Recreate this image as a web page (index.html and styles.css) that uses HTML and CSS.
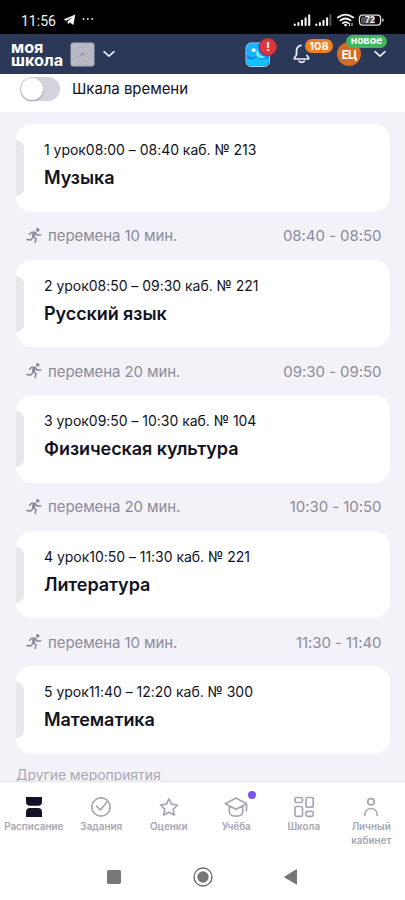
FILE: index.html
```
<!DOCTYPE html>
<html lang="ru">
<head>
<meta charset="utf-8">
<meta name="viewport" content="width=device-width, initial-scale=1">
<title>Моя школа</title>
<link rel="stylesheet" href="styles.css">
</head>
<body>
<svg width="0" height="0" class="defs">
  <symbol id="runner" viewBox="0 0 16 16">
    <circle cx="11.7" cy="1.9" r="1.8" fill="currentColor"/>
    <path d="M3.600 6.300 5.600 4.200 9.300 4.400 6.900 8.600 10 10.600 9.200 14.500M9.500 4.800 11.200 7.200 14.700 6.800M6.700 9.600 5.100 11.900 1 11.600" fill="none" stroke="currentColor" stroke-width="1.6" stroke-linecap="round" stroke-linejoin="round"/>
    <path d="M6.600 4.400 10.200 4.500 8.600 9.200 5.800 8.400Z" fill="currentColor"/>
  </symbol>
</svg>
<div class="screen">
  <div class="status">
    <span class="clock">11:56</span>
    <svg class="plane" width="13" height="12" viewBox="0 0 13 12"><path d="M.5 5.400 12.300.6 10.400 10.900 6.800 8.400 5 10.200 4.600 7.200 9.800 2.800 3.400 6.700Z" fill="#f2f2f2"/></svg>
    <svg class="more" width="12" height="4" viewBox="0 0 12 4"><g fill="#ddd"><circle cx="1.500" cy="2" r="1"/><circle cx="5.800" cy="2" r="1"/><circle cx="10.100" cy="2" r="1"/></g></svg>
    <svg class="signals" width="92" height="16" viewBox="0 0 92 16">
      <g stroke="#f4f4f4" stroke-width="2.100" stroke-linecap="round">
        <path d="M1.800 12.500v.5M5.400 11v2M9 8.800V13M12.600 6.200V13M16.200 3.200V13M23.300 12.500v.5M26.900 11v2M30.500 8.800V13M34.100 6.200V13"/><path d="M37.400 3.200V13" stroke="#555"/>
      </g>
      <g fill="none" stroke="#f4f4f4" stroke-width="1.800" stroke-linecap="round"><path d="M44.800 5.500q7.700-5.600 15.400 0M47.400 8.400q5.100-3.800 10.200 0M49.800 11.100q2.700-2 5.400 0"/></g>
      <circle cx="52.500" cy="13" r="1.300" fill="#f4f4f4"/><path d="M56.500 11v3M59 11v3" stroke="#ddd"/>
      <rect x="66.400" y="3.100" width="21.200" height="10" rx="3" fill="#080808" stroke="#ddd" stroke-width="1.300"/>
      <rect x="68" y="4.800" width="14" height="6.700" rx="1" fill="#555"/>
      <path d="M89.800 6.800v2.800" stroke="#ddd" stroke-width="1.400"/>
      <text x="77" y="11.100" text-anchor="middle" class="charge">72</text>
    </svg>
  </div>
  <header class="top">
    <div class="logo"><span>моя</span><span>школа</span></div>
    <svg class="crest" width="25" height="25" viewBox="0 0 25 25"><rect x=".5" y=".5" width="24" height="24" rx="3" fill="#b1b1bd"/><g fill="none" stroke="#cdcdd7" stroke-width=".7"><circle cx="12.500" cy="12.500" r="9.500"/><circle cx="12.500" cy="12.500" r="6.500"/><circle cx="12.500" cy="12.500" r="3.800"/><path d="M3 7V3h4M18 3h4v4M22 18v4h-4M7 22H3v-4M3 3l5 5m9 9 5 5M22 3l-5 5M8 17l-5 5"/></g><path d="M10.500 11h4v3h-4z" fill="#a0a0ae"/></svg>
    <svg class="chev" width="12" height="8" viewBox="0 0 12 8"><path d="m1 1.700 5 4.500 5-4.500"/></svg>
    <div class="app">
      <svg width="26" height="26" viewBox="0 0 26 26"><rect x="1" y="1" width="23.500" height="23.500" rx="5" fill="#0b83f2" stroke="#a9d5f4"/><path d="M1.700 15.500C5 18.500 10 18 12 14.200c2 3.500 7 4.500 11.500 1.500 1 5-1.500 8-5.500 8H7q-5.300 0-5.300-5Z" fill="#12c3ff"/><path d="M1.700 9.500V6Q1.700 1.700 6 1.700h7C12 9 14 14 21 15c-4 2-8 1.500-10-1-3 2.500-7 1.500-9.300-2Z" fill="#18b6ff"/><path d="M12.500 5c0 6 3 9.500 9 10.200-4 1.900-8.500.9-10.500-2.400Z" fill="#79eaff"/><circle cx="8.600" cy="8.300" r="2" fill="#fff"/></svg>
      <span class="alert">!</span>
    </div>
    <div class="bell">
      <svg width="18" height="20" viewBox="0 0 18 20"><path d="M8 1.400C4.800 2 3.500 4.400 3.500 7.500v3.300L1.300 14.100q-.4.900.7.900H15q1.100 0 .7-.9L14 11.500M6 17.200q2.700 2.400 5.300 0" fill="none" stroke="#eef0f8" stroke-width="1.700" stroke-linecap="round" stroke-linejoin="round"/></svg>
      <span class="count">108</span>
    </div>
    <div class="user"><span class="avatar">ЕЦ</span><span class="fresh">новое</span></div>
    <svg class="chev last" width="12" height="8" viewBox="0 0 12 8"><path d="m1 1.700 5 4.500 5-4.500"/></svg>
  </header>
  <div class="scale"><span class="switch"></span><span class="scale-label">Шкала времени</span></div>
  <main class="list">
    <article class="card"><p class="meta">1 урок08:00 – 08:40 каб. № 213</p><h2>Музыка</h2></article>
    <div class="break"><svg><use href="#runner"/></svg><span>перемена 10 мин.</span><time>08:40 - 08:50</time></div>
    <article class="card"><p class="meta">2 урок08:50 – 09:30 каб. № 221</p><h2>Русский язык</h2></article>
    <div class="break"><svg><use href="#runner"/></svg><span>перемена 20 мин.</span><time>09:30 - 09:50</time></div>
    <article class="card"><p class="meta">3 урок09:50 – 10:30 каб. № 104</p><h2>Физическая культура</h2></article>
    <div class="break"><svg><use href="#runner"/></svg><span>перемена 20 мин.</span><time>10:30 - 10:50</time></div>
    <article class="card"><p class="meta">4 урок10:50 – 11:30 каб. № 221</p><h2>Литература</h2></article>
    <div class="break"><svg><use href="#runner"/></svg><span>перемена 10 мин.</span><time>11:30 - 11:40</time></div>
    <article class="card"><p class="meta">5 урок11:40 – 12:20 каб. № 300</p><h2>Математика</h2></article>
    <h3 class="other">Другие мероприятия</h3>
  </main>
  <nav class="tabs">
    <a class="tab"><svg width="24" height="24" viewBox="0 0 24 24"><path d="M4 2h16v4.500q0 4.300-4 4.300H8q-4 0-4-4.300ZM4 22v-4.700q0-4.300 4-4.300h8q4 0 4 4.300V22Z" fill="#131127"/></svg><span>Расписание</span></a>
    <a class="tab"><svg class="line" width="24" height="24" viewBox="0 0 24 24"><circle cx="12" cy="12" r="9.200"/><path d="m7.500 11 3.800 4 6.700-8"/></svg><span>Задания</span></a>
    <a class="tab"><svg class="line" width="24" height="24" viewBox="0 0 24 24"><path d="m12 3.800 2.600 5.300 5.900.9-4.300 4.100 1 5.900-5.200-2.800L6.800 20l1-5.900L3.500 10l5.900-.9Z"/></svg><span>Оценки</span></a>
    <a class="tab"><svg class="line" width="24" height="24" viewBox="0 0 24 24"><path d="M1.300 8.700 12 3l10.700 5.700L12 14.300ZM5.300 11.200v5.500C5.300 20 9 21.200 12 21.200s6.700-1.200 6.700-4.500v-5.500M22.500 8.700V16"/></svg><i class="dot"></i><span>Учёба</span></a>
    <a class="tab"><svg class="line" width="24" height="24" viewBox="0 0 24 24"><rect x="3" y="2.500" width="7.500" height="5" rx="1.500"/><rect x="14" y="2.500" width="7.200" height="9.700" rx="1.700"/><rect x="3" y="11.500" width="7.500" height="9.800" rx="1.700"/><rect x="14" y="16.300" width="7.200" height="5" rx="1.500"/></svg><span>Школа</span></a>
    <a class="tab"><svg class="line" width="24" height="24" viewBox="0 0 24 24"><circle cx="12" cy="6.800" r="3.200"/><path d="M5.800 20.300c0-9.100 12.400-9.100 12.400 0"/></svg><span>Личный кабинет</span></a>
  </nav>
  <div class="system">
    <svg width="16" height="22" viewBox="0 0 16 22"><rect x="1" y="4" width="14" height="14" rx="1.700" fill="#777"/></svg>
    <svg width="22" height="22" viewBox="0 0 22 22"><circle cx="11" cy="11" r="9" fill="none" stroke="#666" stroke-width="1.300"/><circle cx="11" cy="11" r="5.700" fill="#777"/></svg>
    <svg width="16" height="22" viewBox="0 0 16 22"><path d="M14 3.500v14.800q0 .6-.6.300L1.500 11.500q-.8-.5 0-1L13.400 3.300q.6-.3.600.2Z" fill="#777"/></svg>
  </div>
</div>
</body>
</html>
```
FILE: styles.css
```
* { box-sizing: border-box; }
body { margin: 0; background: #f3f2f8; font-family: Inter, "Noto Sans", sans-serif; color: #11121f; }
p, h2, h3 { margin: 0; }
svg { display: block; flex: none; }
.defs { position: absolute; }
.screen { width: 405px; height: 900px; display: flex; flex-direction: column; overflow: hidden; }

.status { height: 34px; flex: none; background: #000; display: flex; align-items: center; padding: 6px 20px 0 21px; }
.clock { font: 400 14px/20px Roboto, sans-serif; color: #f2f2f2; width: 35px; white-space: nowrap; padding-top: 2px; }
.plane { margin-left: 7px; }
.more { margin-left: 6px; margin-top: -2px; }
.signals { margin-left: auto; }
.charge { font: 700 8.5px Roboto, sans-serif; fill: #fff; }

.top { height: 40px; flex: none; background: #2c3858; display: flex; align-items: center; padding: 0 19px 0 11px; color: #fff; }
.logo { display: flex; flex-direction: column; width: 52px; font-size: 16.2px; font-weight: 700; line-height: 13px; margin-top: -1px; }
.crest { margin-left: 7px; }
.chev { margin-left: 8px; fill: none; stroke: #eef0f8; stroke-width: 1.6; stroke-linecap: round; stroke-linejoin: round; }
.app { position: relative; margin-left: 130px; margin-top: 1px; }
.alert { position: absolute; left: 14px; top: -4px; width: 18px; height: 18px; border-radius: 50%; background: #e0353b; border: 1.5px solid #a82d40; font-size: 12px; font-weight: 700; line-height: 15px; text-align: center; }
.bell { position: relative; margin-left: 22px; }
.count { position: absolute; left: 12px; top: -5px; width: 28px; height: 14px; border-radius: 7px; background: #f08023; font-size: 11px; font-weight: 700; line-height: 14px; text-align: center; }
.user { position: relative; margin-left: 26px; }
.avatar { display: block; width: 24px; height: 24px; border-radius: 50%; background: #d56b20; font-size: 12px; font-weight: 700; line-height: 25px; text-align: center; letter-spacing: -.8px; }
.fresh { position: absolute; left: 9px; top: -7px; width: 41px; height: 13px; border-radius: 7px; background: #3db85c; font-size: 10.5px; font-weight: 700; line-height: 12px; text-align: center; }
.last { margin-left: auto; }

.scale { height: 38px; flex: none; background: #fff; display: flex; align-items: flex-start; padding: 2.5px 20px 0; }
.switch { width: 40px; height: 24px; border-radius: 12px; background: #d4d2dc; padding: 1px; }
.switch::before { content: ""; display: block; width: 22px; height: 22px; border-radius: 50%; background: #fff; box-shadow: 0 1px 2px #9995a0; }
.scale-label { margin-left: 12px; font-size: 15px; line-height: 24px; letter-spacing: -.05px; }

.list { flex: 1; min-height: 0; overflow: hidden; padding: 12.3px 15.5px 0 16px; }
.card { position: relative; height: 87.7px; border-radius: 16px; background: #fff; padding: 16.2px 28px 0; overflow: hidden; }
.card::before { content: ""; position: absolute; left: 0; top: 16px; width: 8px; height: 56px; border-radius: 0 8px 8px 0; background: #e7e7ec; }
.meta { font-size: 14px; line-height: 20px; white-space: nowrap; letter-spacing: -.03px; }
.card h2 { font-size: 18px; font-weight: 600; line-height: 24px; margin-top: 6px; letter-spacing: -.07px; }
.break { height: 47.75px; display: flex; align-items: center; padding: 0 8px 0 10px; color: #8c8b9b; font-size: 15px; }
.break svg { width: 16px; height: 16px; }
.break span { margin-left: 6px; letter-spacing: -.09px; }
.break time { margin-left: auto; font-kerning: none; letter-spacing: -.05px; }
.other { font-size: 14px; font-weight: 400; line-height: 20px; margin-top: 11.5px; color: #aaa9b6; letter-spacing: -.07px; }

.tabs { height: 73px; flex: none; background: #fff; border-top: 1px solid #e3e2e9; display: grid; grid-template-columns: repeat(6, 1fr); padding-top: 13px; }
.tab { position: relative; display: flex; flex-direction: column; align-items: center; color: #a7a6b3; font-size: 9.9px; font-weight: 600; line-height: 14px; text-align: center; }
.tab .line { fill: none; stroke: #a7a6b3; stroke-width: 1.7; stroke-linejoin: round; stroke-linecap: round; }
.dot { position: absolute; left: 45px; top: -4px; width: 8px; height: 8px; border-radius: 50%; background: #7654ed; }

.system { height: 46px; flex: none; background: #fff; display: flex; align-items: center; justify-content: space-between; padding: 0 106px; }
```
